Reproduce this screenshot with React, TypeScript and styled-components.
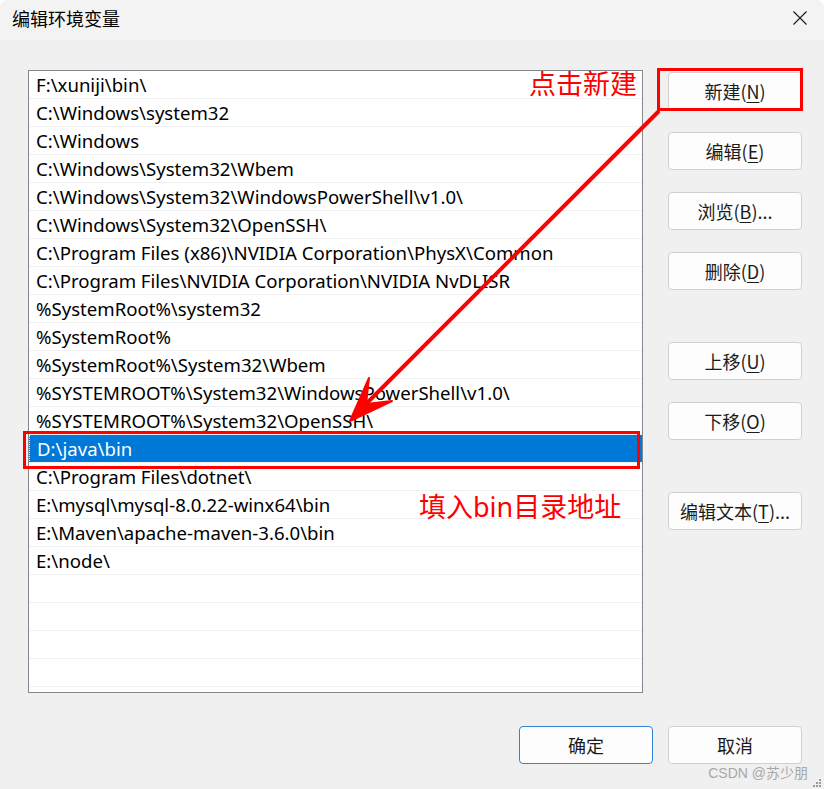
import { createGlobalStyle, styled } from "styled-components";

const GlobalStyle = createGlobalStyle`
  html, body {
    margin: 0;
    padding: 0;
    background: #ffffff;
  }
  body {
    font-family: "Noto Sans", "Noto Sans CJK SC", sans-serif;
  }
`;

const paths = [
  "F:\\xuniji\\bin\\",
  "C:\\Windows\\system32",
  "C:\\Windows",
  "C:\\Windows\\System32\\Wbem",
  "C:\\Windows\\System32\\WindowsPowerShell\\v1.0\\",
  "C:\\Windows\\System32\\OpenSSH\\",
  "C:\\Program Files (x86)\\NVIDIA Corporation\\PhysX\\Common",
  "C:\\Program Files\\NVIDIA Corporation\\NVIDIA NvDLISR",
  "%SystemRoot%\\system32",
  "%SystemRoot%",
  "%SystemRoot%\\System32\\Wbem",
  "%SYSTEMROOT%\\System32\\WindowsPowerShell\\v1.0\\",
  "%SYSTEMROOT%\\System32\\OpenSSH\\",
  "D:\\java\\bin",
  "C:\\Program Files\\dotnet\\",
  "E:\\mysql\\mysql-8.0.22-winx64\\bin",
  "E:\\Maven\\apache-maven-3.6.0\\bin",
  "E:\\node\\",
  "",
  "",
  "",
  "",
  "",
];

const SELECTED = 13;

const sideButtons = [
  { label: "新建", key: "N", gap: 0 },
  { label: "编辑", key: "E", gap: 22 },
  { label: "浏览", key: "B", gap: 22, dots: true },
  { label: "删除", key: "D", gap: 22 },
  { label: "上移", key: "U", gap: 52 },
  { label: "下移", key: "O", gap: 22 },
  { label: "编辑文本", key: "T", gap: 52, dots: true },
];

const App = (): JSX.Element => {
  return (
    <Window>
      <GlobalStyle />
      <TitleBar>
        <Title>编辑环境变量</Title>
        <CloseIcon width="16" height="16" viewBox="0 0 16 16">
          <path d="M1.5 1.5 L14.5 14.5 M14.5 1.5 L1.5 14.5" stroke="#1a1a1a" strokeWidth="1.1" fill="none" />
        </CloseIcon>
      </TitleBar>

      <Body>
        <ListBox>
          {paths.map((p, i) => (
            <Row key={i} $selected={i === SELECTED}>
              {p}
            </Row>
          ))}
        </ListBox>

        <SideColumn>
          {sideButtons.map((b) => (
            <Button key={b.key} $gap={b.gap}>
              {b.label}(<u>{b.key}</u>){b.dots ? "..." : ""}
            </Button>
          ))}
        </SideColumn>
      </Body>

      <Footer>
        <Button $primary>确定</Button>
        <Button>取消</Button>
      </Footer>

      {/* annotations drawn over the dialog */}
      <RedBox $x={657} $y={68} $w={146} $h={43} />
      <RedBox $x={23} $y={431} $w={617} $h={38} />
      <Note $x={529} $y={63}>点击新建</Note>
      <Note $x={419} $y={486}>填入bin目录地址</Note>
      <ArrowLayer width="824" height="789" viewBox="0 0 824 789">
        <line x1="658" y1="112" x2="362" y2="408" stroke="#ff0000" strokeWidth="4" strokeLinecap="round" />
        <polygon points="350,421 369,378 366,404 392,401" fill="#ff0000" stroke="#ff0000" strokeWidth="2" strokeLinejoin="round" />
      </ArrowLayer>

      <Watermark>CSDN @苏少朋</Watermark>
      <Grip width="10" height="10" viewBox="0 0 10 10">
        <rect x="7" y="1" width="2" height="2" fill="#9a9a9a" />
        <rect x="4" y="4" width="2" height="2" fill="#9a9a9a" />
        <rect x="7" y="4" width="2" height="2" fill="#9a9a9a" />
        <rect x="1" y="7" width="2" height="2" fill="#9a9a9a" />
        <rect x="4" y="7" width="2" height="2" fill="#9a9a9a" />
        <rect x="7" y="7" width="2" height="2" fill="#9a9a9a" />
      </Grip>
    </Window>
  );
};

export default App;

const Window = styled.div`
  position: relative;
  width: 824px;
  height: 789px;
  background: #f0f0f0;
  border-top-left-radius: 8px;
  border-top-right-radius: 8px;
  overflow: hidden;
  display: flex;
  flex-direction: column;
`;

const TitleBar = styled.div`
  height: 40px;
  background: #f3f3f3;
  display: flex;
  align-items: center;
  justify-content: space-between;
  padding: 0 16px 0 12px;
  box-sizing: border-box;
`;

const Title = styled.div`
  font-family: "Noto Sans CJK SC", sans-serif;
  font-size: 18px;
  color: #000;
  margin-top: -4px;
`;

const CloseIcon = styled.svg`
  margin-top: -4px;
`;

const Body = styled.div`
  display: flex;
  gap: 25px;
  padding: 30px 0 0 28px;
`;

const ListBox = styled.div`
  width: 615px;
  height: 623px;
  box-sizing: border-box;
  border: 1px solid #828790;
  background: #ffffff;
  overflow: hidden;
`;

const Row = styled.div<{ $selected?: boolean }>`
  height: 28px;
  box-sizing: border-box;
  padding: 1px 0 0 7px;
  border-bottom: 1px solid #f0f0f0;
  font-family: "Noto Sans", "Noto Sans CJK SC", sans-serif;
  font-size: 18.6px;
  line-height: 26px;
  white-space: nowrap;
  color: ${(p) => (p.$selected ? "#ffffff" : "#000000")};
  background: ${(p) => (p.$selected ? "#0078d7" : "#ffffff")};
  border-left: ${(p) => (p.$selected ? "1px dotted #e6f0fa" : "0")};
`;

const SideColumn = styled.div`
  display: flex;
  flex-direction: column;
  padding-top: 2px;
`;

const Button = styled.div<{ $gap?: number; $primary?: boolean }>`
  width: 134px;
  height: 38px;
  box-sizing: border-box;
  margin-top: ${(p) => p.$gap ?? 0}px;
  display: flex;
  align-items: center;
  justify-content: center;
  background: #fdfdfd;
  border: 1px solid ${(p) => (p.$primary ? "#2f83d6" : "#d0d0d0")};
  border-radius: 4px;
  font-family: "Noto Sans CJK SC", sans-serif;
  font-size: 18px;
  color: #1b1b1b;

  u {
    text-decoration-thickness: 1px;
    text-underline-offset: 3px;
  }
`;

const Footer = styled.div`
  display: flex;
  justify-content: flex-end;
  gap: 15px;
  padding-right: 22px;
  margin-top: 33px;
`;

const RedBox = styled.div<{ $x: number; $y: number; $w: number; $h: number }>`
  position: absolute;
  left: ${(p) => p.$x}px;
  top: ${(p) => p.$y}px;
  width: ${(p) => p.$w}px;
  height: ${(p) => p.$h}px;
  box-sizing: border-box;
  border: 3px solid #ff0000;
`;

const Note = styled.div<{ $x: number; $y: number }>`
  position: absolute;
  left: ${(p) => p.$x}px;
  top: ${(p) => p.$y}px;
  font-family: "Noto Sans", "Noto Sans CJK SC", sans-serif;
  font-size: 27px;
  color: #ff0000;
  white-space: nowrap;
`;

const ArrowLayer = styled.svg`
  position: absolute;
  left: 0;
  top: 0;
  pointer-events: none;
`;

const Watermark = styled.div`
  position: absolute;
  right: 16px;
  bottom: 7px;
  font-family: "Liberation Sans", "Noto Sans CJK SC", sans-serif;
  font-size: 14px;
  color: #a8a8a8;
`;

const Grip = styled.svg`
  position: absolute;
  right: 2px;
  bottom: 1px;
`;
